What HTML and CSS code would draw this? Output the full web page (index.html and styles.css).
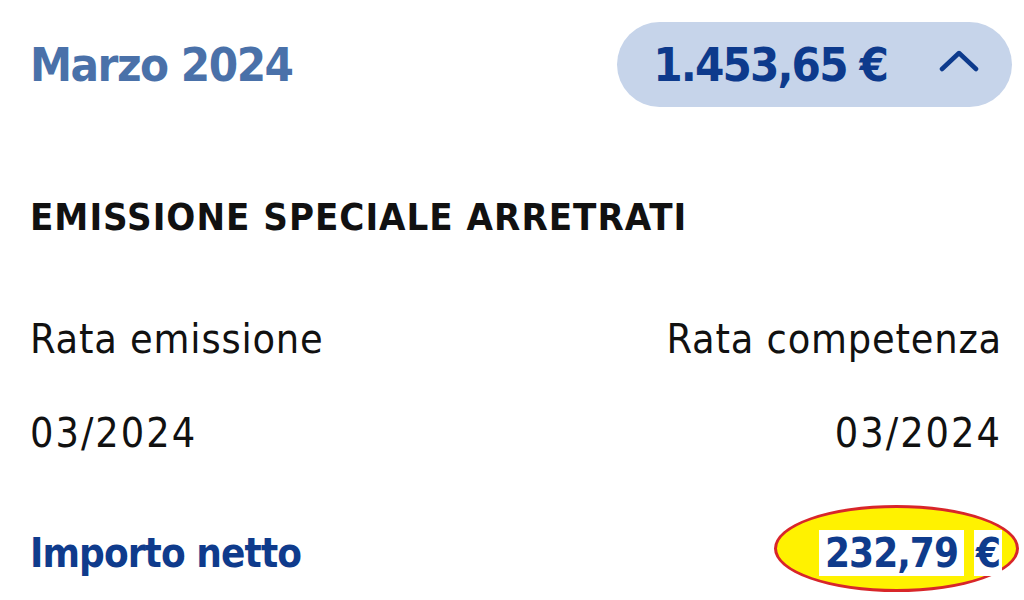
FILE: index.html
```html
<!DOCTYPE html>
<html lang="it">
<head>
<meta charset="UTF-8"/>
<meta name="viewport" content="width=device-width, initial-scale=1"/>
<title>Marzo 2024</title>
<link rel="stylesheet" href="styles.css">
</head>
<body>
<main class="month-card">

<header class="month-head">
    <h1 class="month-title">Marzo 2024</h1>
    <button class="total-pill" type="button">
        <span class="total-amount">1.453,65 €</span>
        <svg class="chevron" width="40" height="24" viewBox="0 0 40 24" aria-hidden="true">
            <path d="M3 20 L20 4 L37 20" fill="none" stroke="#0d3a8c" stroke-width="4.5" stroke-linecap="round" stroke-linejoin="round"/>
        </svg>
    </button>
</header>

<section class="issue">
    <h2 class="issue-title">EMISSIONE SPECIALE ARRETRATI</h2>

    <div class="issue-grid">
        <span class="cell-label">Rata emissione</span>
        <span class="cell-label right">Rata competenza</span>
        <span class="cell-value">03/2024</span>
        <span class="cell-value right">03/2024</span>
    </div>

    <div class="net-row">
        <span class="net-label">Importo netto</span>
        <span class="net-value">
            <span class="net-mark"></span>
            <span class="net-text num">232,79</span><span class="net-gap"></span><span class="net-text cur">€</span>
        </span>
    </div>
</section>

</main>
</body>
</html>
```

FILE: styles.css
```css
body
{
margin: 0;
padding: 0;
background: #ffffff;
font-family: "DejaVu Sans Condensed", "DejaVu Sans", sans-serif;
color: #111111;
}

h1, h2
{
margin: 0;
padding: 0;
}

.month-card
{
padding: 22px 12px 40px 30px;
}

/* header row: month + total pill */
.month-head
{
display: flex;
align-items: center;
justify-content: space-between;
}

.month-title
{
font-size: 47px;
font-weight: 600;
color: #4a71a9;
letter-spacing: -1.5px;
}

.total-pill
{
display: flex;
align-items: center;
gap: 52px;
height: 85px;
padding: 0 33px 0 36px;
border: 0;
border-radius: 43px;
background: #c6d4ea;
font-family: inherit;
cursor: pointer;
}

.total-amount
{
font-size: 47px;
font-weight: 600;
color: #0d3a8c;
letter-spacing: -1.9px;
}

.chevron
{
display: block;
margin-top: -8px;
}

/* issue block */
.issue
{
padding-right: 10px;
}

.issue-title
{
margin-top: 86px;
font-size: 38px;
font-weight: 700;
line-height: 48px;
letter-spacing: 1px;
color: #111111;
}

.issue-grid
{
display: grid;
grid-template-columns: 1fr 1fr;
row-gap: 48px;
margin-top: 75px;
}

.cell-label,
.cell-value
{
font-size: 41px;
line-height: 46px;
font-weight: 400;
color: #111111;
}

.cell-label
{
letter-spacing: 0.8px;
}

.cell-value
{
letter-spacing: 2px;
}

.right
{
text-align: right;
}

.net-row
{
display: flex;
align-items: center;
justify-content: space-between;
margin-top: 74px;
}

.net-label,
.net-value
{
font-size: 40px;
line-height: 46px;
font-weight: 700;
color: #0f3b8c;
}

.net-label
{
letter-spacing: -0.9px;
}

.net-value
{
position: relative;
display: flex;
letter-spacing: -1px;
}

/* hand-drawn highlight over the amount */
.net-mark
{
position: absolute;
left: -45px;
right: -17px;
top: -25px;
bottom: -16px;
border: 3px solid #d8262a;
border-radius: 50%;
background: #fff200;
}

.net-text
{
position: relative;
background: #ffffff;
}

.num
{
padding: 0 6px;
}

.cur
{
padding: 0 2px;
}

.net-gap
{
width: 10px;
}
```
